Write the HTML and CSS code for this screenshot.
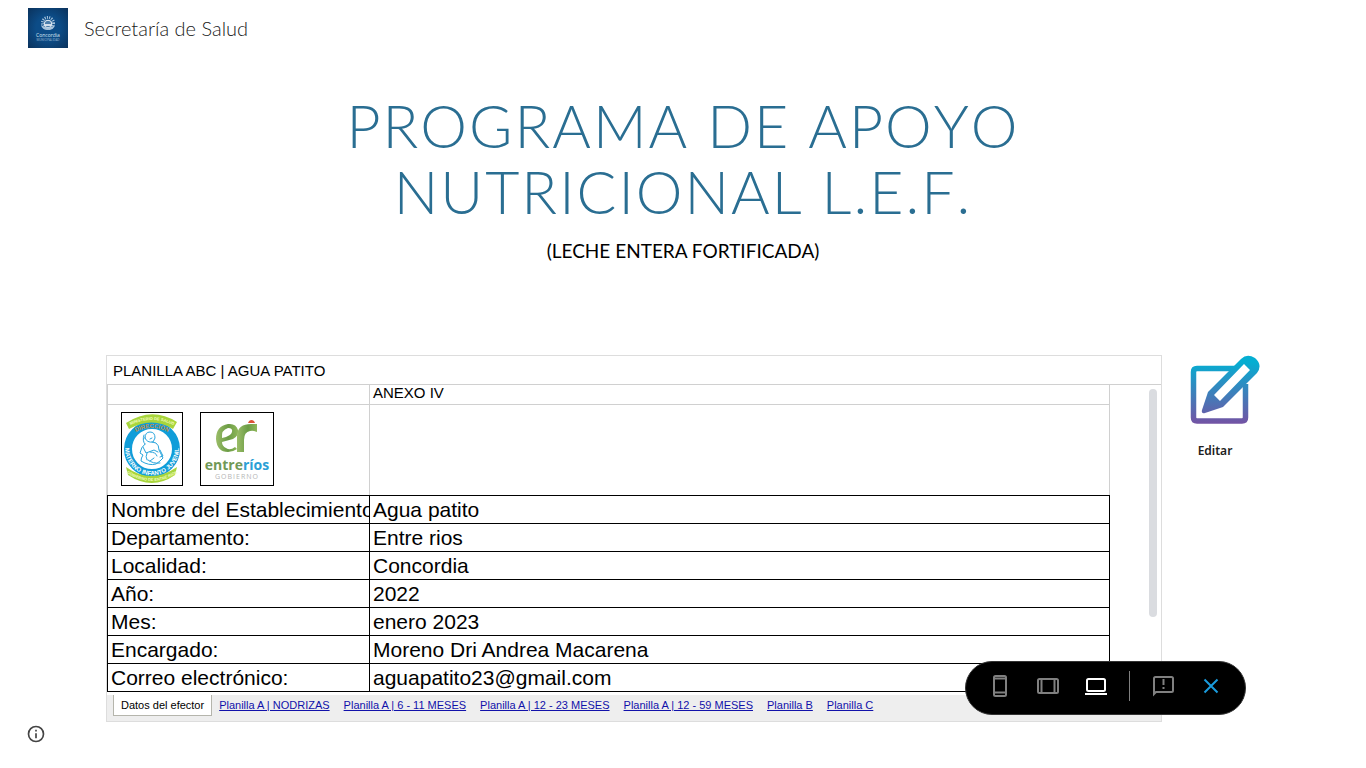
FILE: index.html
```html
<!DOCTYPE html>
<html lang="es">
<head>
<meta charset="utf-8">
<title>Secretaría de Salud</title>
<link rel="stylesheet" href="styles.css">
</head>
<body>
<header class="site-header">
  <svg class="site-logo" viewBox="0 0 40 40" role="img" aria-label="Concordia Municipalidad">
    <defs><radialGradient id="navy" r="0.75"><stop offset="0.4" stop-color="#0c4c87"/><stop offset="1" stop-color="#0a2f57"/></radialGradient></defs>
    <rect width="40" height="40" fill="url(#navy)"/>
    <circle cx="20" cy="15" r="5.500" fill="none" stroke="#a9c5dd" stroke-width="3" stroke-dasharray="1 1.200"/>
    <circle cx="20" cy="16" r="3.800" fill="#4c7eab" stroke="#eef5fa" stroke-width="1"/>
    <path d="M13 17q7 5 14 0q-1 5-7 5t-7-5z" fill="#a9c5dd"/>
    <path d="M17 17h6" stroke="#fff" stroke-width="1.500"/>
    <text class="logo-name" x="20" y="29" text-anchor="middle">Concordia</text>
    <text class="logo-sub" x="20" y="33" text-anchor="middle">MUNICIPALIDAD</text>
  </svg>
  <a class="site-name" href="#">Secretaría de Salud</a>
</header>

<main>
  <section class="hero">
    <h1>PROGRAMA DE APOYO<br>NUTRICIONAL L.E.F.</h1>
    <p>(LECHE ENTERA FORTIFICADA)</p>
  </section>

  <section class="content">
    <div class="sheet">
      <h2 class="sheet-title">PLANILLA ABC | AGUA PATITO</h2>
      <div class="sheet-body">
        <table class="grid">
          <colgroup><col class="col-label"><col></colgroup>
          <tbody class="head-rows">
            <tr class="row-annex"><td></td><td>ANEXO IV</td></tr>
            <tr class="row-logos"><td>
              <div class="logos">
                <svg class="badge-health" viewBox="0 0 60 72" role="img" aria-label="Dirección Materno Infanto Juvenil">
                  <defs>
                    <path id="arcTop" d="M3 15Q30-1 57 15"/>
                    <path id="arcDir" d="M9 22Q30 8 51 22"/>
                    <path id="arcMid" d="M4 28A27 27 0 1 0 56 28"/>
                    <path id="arcBottom" d="M3 59Q30 77 57 59"/>
                  </defs>
                  <circle cx="30" cy="36" r="24" fill="#fff" stroke="#109dd9" stroke-width="8"/>
                  <path d="M4 10Q30-7 55 9L51 16Q30 3 7 16z" fill="#a8d53b"/>
                  <path d="M4 54Q29 72 55 54L53 62Q30 78 6 62z" fill="#a8d53b"/>
                  <g fill="none" stroke="#2aa5dc" stroke-width="1" stroke-linejoin="round" stroke-linecap="round">
                    <path d="M23 25q0-6 5-6q5 0 5 6l-2 4q-6 1-8-4zM22 22q-2 6 1 9M23 31q-4 3-5 9l3 2q-2 3-2 6q8 5 15 3l4-3 3-3-4-8q0-5-3-7l-4-1M21 34l3 6 8-3 4 2M25 40q-2 4 0 7M28 39q6 0 7 4M26 47q5 4 12 3M32 45l-4 3M38 37l3 6-3 1M28 26l2-1"/>
                  </g>
                  <text class="t-pale"><textPath href="#arcTop" startOffset="50%" text-anchor="middle">MINISTERIO DE SALUD</textPath></text>
                  <text class="t-orange"><textPath href="#arcDir" startOffset="50%" text-anchor="middle">DIRECCIÓN</textPath></text>
                  <text class="t-white"><textPath href="#arcMid" startOffset="50%" text-anchor="middle">MATERNO INFANTO JUVENIL</textPath></text>
                  <text class="t-pale"><textPath href="#arcBottom" startOffset="50%" text-anchor="middle">GOBIERNO DE ENTRE RÍOS</textPath></text>
                </svg>
                <svg class="badge-province" viewBox="0 0 72 72" role="img" aria-label="Entre Ríos Gobierno">
                  <defs><linearGradient id="leaf"><stop offset="0" stop-color="#9bbd68"/><stop offset="0.550" stop-color="#6b9c45"/><stop offset="1" stop-color="#8fb75a"/></linearGradient></defs>
                  <path d="M34 34Q29 38 25 35Q21 33 21 29L32 26Q38 23 37 17Q35 10 27 11Q15 13 15 26Q16 39 27 39Q32 39 36 36zM21 25Q20 17 27 15Q32 15 31 19Q30 23 21 25z" fill="url(#leaf)"/>
                  <path d="M36 39V22Q37 11 50 11H56V19Q52 17 49 18Q43 19 43 27V39z" fill="url(#leaf)"/>
                  <path d="M47 10Q48 7 50.500 7Q53 7 54 10z" fill="#dd5337"/>
                  <text class="er-name" x="36" y="57" text-anchor="middle"><tspan fill="#719957">entre</tspan><tspan fill="#2b9fd6">ríos</tspan></text>
                  <text class="er-sub" x="36" y="66" text-anchor="middle">GOBIERNO</text>
                </svg>
              </div>
            </td><td></td></tr>
          </tbody>
          <tbody class="data-rows">
            <tr><th scope="row">Nombre del Establecimiento:</th><td>Agua patito</td></tr>
            <tr><th scope="row">Departamento:</th><td>Entre rios</td></tr>
            <tr><th scope="row">Localidad:</th><td>Concordia</td></tr>
            <tr><th scope="row">Año:</th><td>2022</td></tr>
            <tr><th scope="row">Mes:</th><td>enero 2023</td></tr>
            <tr><th scope="row">Encargado:</th><td>Moreno Dri Andrea Macarena</td></tr>
            <tr><th scope="row">Correo electrónico:</th><td>aguapatito23@gmail.com</td></tr>
          </tbody>
        </table>
        <div class="scroll-thumb"></div>
      </div>
      <nav class="tabs">
        <span class="tab-active">Datos del efector</span>
        <a href="#">Planilla A | NODRIZAS</a>
        <a href="#">Planilla A | 6 - 11 MESES</a>
        <a href="#">Planilla A | 12 - 23 MESES</a>
        <a href="#">Planilla A | 12 - 59 MESES</a>
        <a href="#">Planilla B</a>
        <a href="#">Planilla C</a>
      </nav>
    </div>

    <a class="edit" href="#">
      <svg viewBox="0 0 70 70" aria-hidden="true">
        <defs><linearGradient id="ink" gradientUnits="userSpaceOnUse" x1="0" y1="0" x2="0" y2="70"><stop offset="0.100" stop-color="#05aed2"/><stop offset="1" stop-color="#7551a3"/></linearGradient></defs>
        <path d="M46 13.500H7Q3.500 13.500 3.500 17V62.500Q3.500 66 7 66H52Q55.500 66 55.500 62.500V29" fill="none" stroke="url(#ink)" stroke-width="5.500"/>
        <path fill="url(#ink)" fill-rule="evenodd" d="M18 37L51 4Q57-2 65 3Q73 10 67 18L33 52L15 58Q11 59 12 55zM24 40L30 46L60 15L54 9z"/>
      </svg>
      <span>Editar</span>
    </a>
  </section>
</main>

<button class="info" type="button" aria-label="Información">
  <svg viewBox="0 0 24 24"><circle cx="12" cy="12" r="9" fill="none" stroke="#444" stroke-width="2"/><path d="M11 7h2v2h-2zM11 11h2v6h-2z" fill="#444"/></svg>
</button>

<div class="preview-bar">
  <button type="button" aria-label="Teléfono"><svg viewBox="0 0 24 24"><rect x="6" y="2" width="12" height="20" rx="1.500"/><path d="M6 4.500h12M6 18.500h12"/></svg></button>
  <button type="button" aria-label="Tableta"><svg viewBox="0 0 24 24"><rect x="2" y="5" width="20" height="14" rx="1.500"/><path d="M5.500 5v14M18.500 5v14"/></svg></button>
  <button type="button" class="selected" aria-label="Pantalla grande"><svg viewBox="0 0 24 24"><rect x="3" y="5" width="18" height="12" rx="1.500"/><path d="M1 20h22"/></svg></button>
  <span class="divider"></span>
  <button type="button" aria-label="Comentarios"><svg viewBox="0 0 24 24"><path d="M3 20V4.500Q3 3 4.500 3H20.500Q22 3 22 4.500V16.500Q22 18 20.500 18H5z"/><path d="M12.500 5v6M12.500 13v2"/></svg></button>
  <button type="button" class="close" aria-label="Cerrar"><svg viewBox="0 0 24 24"><path d="M5.500 5.500l13 13M18.500 5.500l-13 13"/></svg></button>
</div>
</body>
</html>
```
FILE: styles.css
```css
* { box-sizing: border-box; }
body { margin: 0; background: #fff; color: #000; font-family: Lato, sans-serif; }
a { color: inherit; text-decoration: none; }
button { padding: 0; border: 0; background: none; cursor: pointer; }
svg { display: block; }

.site-header { display: flex; align-items: center; gap: 16px; height: 56px; padding: 0 28px; }
.site-logo { width: 40px; height: 40px; }
.logo-name { font: 5px "Open Sans", sans-serif; fill: #dce9f3; }
.logo-sub { font: 3px "Open Sans", sans-serif; fill: #9cbad2; }
.site-name { font-size: 20px; line-height: 28px; font-weight: 300; color: #212121; }

.hero { padding: 37px 48px 0; text-align: center; }
.hero h1 { margin: 0; font-size: 59px; line-height: 66px; font-weight: 300; font-kerning: none; letter-spacing: 2px; color: #2a6e92; }
.hero p { margin: 13px 0 0; font-size: 19px; line-height: 26px; }

.content { display: grid; grid-template-columns: minmax(0, 1fr) 90px; gap: 8px; align-items: start; padding: 91px 106px 0; }
.sheet { border: 1px solid #ddd; font-family: "Liberation Sans", Arial, sans-serif; }
.sheet-title { margin: 0; padding: 1px 6px 0; font-size: 15px; line-height: 27px; font-weight: 400; }
.sheet-body { position: relative; padding-bottom: 3px; border-top: 1px solid #d0d0d0; }
.grid { width: calc(100% - 51px); margin-top: -1px; border-collapse: collapse; table-layout: fixed; }
.col-label { width: 262px; }
.grid th, .grid td { padding: 0 3px; border: 1px solid #d0d0d0; overflow: hidden; white-space: nowrap; text-align: left; font-weight: 400; }
.grid .row-annex td { height: 20px; font-size: 15px; line-height: 16px; vertical-align: top; }
.grid .row-logos td { height: 91px; border-bottom-color: #000; }
.grid .data-rows th, .grid .data-rows td { height: 28px; border-color: #000; font-size: 21px; line-height: 24px; }
.logos { display: flex; align-items: flex-start; gap: 17px; padding: 0 10px 2px; }
.badge-health, .badge-province { height: 74px; border: 1px solid #000; }
.badge-health { width: 62px; }
.badge-province { width: 74px; }
.t-pale { font: bold 4px "Liberation Sans", sans-serif; fill: #f4ffc4; }
.t-orange { font: bold 6px "Liberation Sans", sans-serif; fill: #c98d3b; }
.t-white { font: bold 6px "Liberation Sans", sans-serif; fill: #fff; }
.er-name { font: bold 14px "Open Sans", sans-serif; }
.er-sub { font: 7px "Open Sans", sans-serif; letter-spacing: 1px; fill: #b5b5b5; }
.scroll-thumb { position: absolute; top: 4px; right: 4px; width: 8px; height: 228px; border-radius: 4px; background: #dadce0; }

.tabs { display: flex; align-items: flex-start; gap: 14px; height: 26px; padding: 0 6px; background: #eee; font-size: 11px; line-height: 20px; white-space: nowrap; }
.tabs a { color: #11a; text-decoration: underline; }
.tab-active { margin-right: -7px; padding: 0 7px; border: 1px solid #b5b5ac; border-top: 0; background: #fff; }

.edit { display: flex; flex-direction: column; align-items: center; gap: 16px; font-family: "Noto Sans", sans-serif; font-size: 12px; line-height: 20px; font-weight: 600; color: #212121; }
.edit svg { width: 70px; height: 70px; align-self: flex-end; }

.info { position: fixed; left: 26px; bottom: 24px; }
.info svg { width: 20px; height: 20px; }

.preview-bar { position: fixed; right: 120px; bottom: 53px; display: flex; align-items: center; gap: 24px; height: 54px; padding: 0 22px 4px; border: 1px solid #333; border-radius: 27px; background: #000; color: #808080; }
.preview-bar button { color: inherit; }
.preview-bar svg { width: 24px; height: 24px; fill: none; stroke: currentColor; stroke-width: 2; }
.preview-bar .selected { color: #fff; }
.preview-bar .close { color: #1a9bdc; }
.divider { width: 1px; height: 30px; margin: 0 -3px; background: #808080; }
```
